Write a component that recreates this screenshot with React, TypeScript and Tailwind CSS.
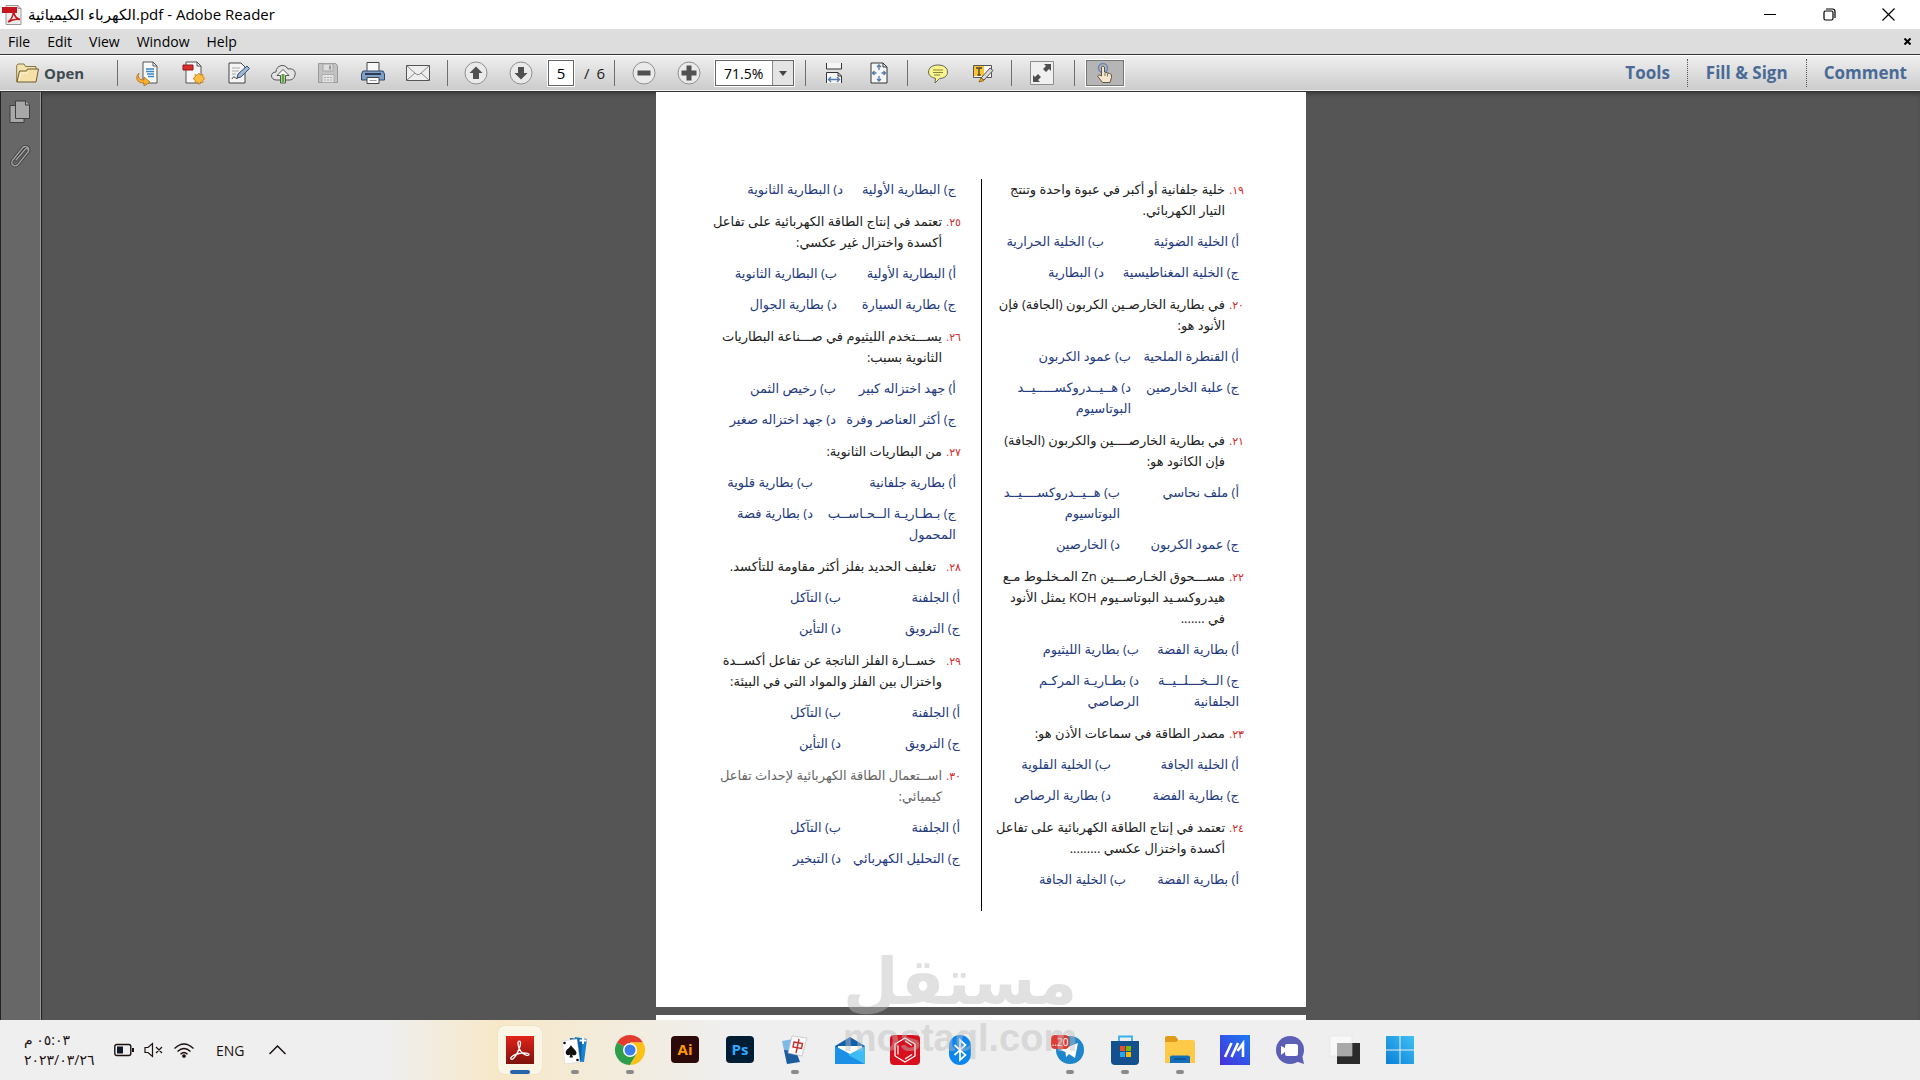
import type { ReactNode } from "react";
import { clsx } from "clsx";

interface Question {
  num?: string;
  lines: string[];
  cols: string;
  faded?: boolean;
  wide?: boolean;
  indent?: boolean;
  options: string[][];
}

const rightColumn: Question[] = [
  {
    num: "١٩",
    lines: ["خلية جلفانية أو أكبر في عبوة واحدة وتنتج", "التيار الكهربائي."],
    cols: "grid-cols-[135px_1fr]",
    options: [["أ) الخلية الضوئية"], ["ب) الخلية الحرارية"], ["ج) الخلية المغناطيسية"], ["د) البطارية"]],
  },
  {
    num: "٢٠",
    lines: ["في بطارية الخارصـين الكربون (الجافة) فإن", "الأنود هو:"],
    cols: "grid-cols-[108px_1fr]",
    options: [["أ) القنطرة الملحية"], ["ب) عمود الكربون"], ["ج) علبة الخارصين"], ["د) هــيــدروكســـــيــد", "البوتاسيوم"]],
  },
  {
    num: "٢١",
    lines: ["في بطارية الخارصــــين والكربون (الجافة)", "فإن الكاثود هو:"],
    cols: "grid-cols-[119px_1fr]",
    options: [["أ) ملف نحاسي"], ["ب) هــيــدروكســــيــد", "البوتاسيوم"], ["ج) عمود الكربون"], ["د) الخارصين"]],
  },
  {
    num: "٢٢",
    lines: ["مســـحوق الخـارصـــين Zn المـخلـوط مـع", "هيدروكسـيد البوتاسـيوم KOH يمثل الأنود", "في ......."],
    cols: "grid-cols-[100px_1fr]",
    options: [["أ) بطارية الفضة"], ["ب) بطارية الليثيوم"], ["ج) الــخـــلــيــة", "الجلفانية"], ["د) بطـاريـة المركـم", "الرصاصي"]],
  },
  {
    num: "٢٣",
    lines: ["مصدر الطاقة في سماعات الأذن هو:"],
    cols: "grid-cols-[128px_1fr]",
    options: [["أ) الخلية الجافة"], ["ب) الخلية القلوية"], ["ج) بطارية الفضة"], ["د) بطارية الرصاص"]],
  },
  {
    num: "٢٤",
    lines: ["تعتمد في إنتاج الطاقة الكهربائية على تفاعل", "أكسدة واختزال عكسي ........."],
    cols: "grid-cols-[113px_1fr]",
    options: [["أ) بطارية الفضة"], ["ب) الخلية الجافة"]],
  },
];

const leftColumn: Question[] = [
  {
    lines: [],
    cols: "grid-cols-[113px_1fr]",
    options: [["ج) البطارية الأولية"], ["د) البطارية الثانوية"]],
  },
  {
    num: "٢٥",
    lines: ["تعتمد في إنتاج الطاقة الكهربائية على تفاعل", "أكسدة واختزال غير عكسي:"],
    cols: "grid-cols-[119px_1fr]",
    options: [["أ) البطارية الأولية"], ["ب) البطارية الثانوية"], ["ج) بطارية السيارة"], ["د) بطارية الجوال"]],
  },
  {
    num: "٢٦",
    lines: ["يســـتخدم الليثيوم في صـــناعة البطاريات", "الثانوية بسبب:"],
    cols: "grid-cols-[120px_1fr]",
    options: [["أ) جهد اختزاله كبير"], ["ب) رخيص الثمن"], ["ج) أكثر العناصر وفرة"], ["د) جهد اختزاله صغير"]],
  },
  {
    num: "٢٧",
    lines: ["من البطاريات الثانوية:"],
    cols: "grid-cols-[143px_1fr]",
    options: [["أ) بطارية جلفانية"], ["ب) بطارية قلوية"], ["ج) بـطـاريـة الــحـاســب", "المحمول"], ["د) بطارية فضة"]],
  },
  {
    num: "٢٨",
    lines: ["تغليف الحديد بفلز أكثر مقاومة للتأكسد."],
    cols: "grid-cols-[119px_1fr]",
    wide: true,
    indent: true,
    options: [["أ) الجلفنة"], ["ب) التآكل"], ["ج) الترويق"], ["د) التأين"]],
  },
  {
    num: "٢٩",
    lines: ["خســارة الفلز الناتجة عن تفاعل أكســدة", "واختزال بين الفلز والمواد التي في البيئة:"],
    cols: "grid-cols-[119px_1fr]",
    wide: true,
    indent: true,
    options: [["أ) الجلفنة"], ["ب) التآكل"], ["ج) الترويق"], ["د) التأين"]],
  },
  {
    num: "٣٠",
    lines: ["اســتعمال الطاقة الكهربائية لإحداث تفاعل", "كيميائي:"],
    cols: "grid-cols-[119px_1fr]",
    faded: true,
    wide: true,
    options: [["أ) الجلفنة"], ["ب) التآكل"], ["ج) التحليل الكهربائي"], ["د) التبخير"]],
  },
];

function QuestionBlock({ q }: { q: Question }) {
  return (
    <li className="mb-[11px]">
      {q.num && (
        <div className={clsx("mb-[10px] flex", q.faded ? "text-[#666]" : "text-[#222]")}>
          <span className="w-[19px] shrink-0 text-[11px] text-[#d22a2a]">{q.num}.</span>
          <p className={clsx(q.indent && "indent-[6px]")}>
            {q.lines.map((l, i) => (
              <span key={l} className={clsx("block", i > 0 && "indent-0")}>{l}</span>
            ))}
          </p>
        </div>
      )}
      <div className={clsx("grid gap-y-[10px] text-[#1f3b7d]", q.cols, q.wide ? "pr-px" : "pr-[5px]")}>
        {q.options.map((o) => (
          <p key={o[0]}>
            {o.map((l) => (
              <span key={l} className="block">{l}</span>
            ))}
          </p>
        ))}
      </div>
    </li>
  );
}

function Sep({ className }: { className?: string }) {
  return <span className={clsx("h-[26px] w-px shrink-0 bg-[#6e6e6e]", className)} />;
}

function Tool({ label, children }: { label: string; children: ReactNode }) {
  return (
    <button aria-label={label} className="flex h-[30px] w-[45px] shrink-0 items-center justify-center">
      <svg width="26" height="26" viewBox="0 0 26 26" fill="none">
        {children}
      </svg>
    </button>
  );
}

function PdfIcon() {
  return (
    <svg width="20" height="20" viewBox="0 0 20 20" fill="none">
      <path d="M4 .5h12l3 3v16H4z" fill="#eee" stroke="#999" />
      <path d="M16 .5v3h3" stroke="#999" />
      <path d="M0 2h15v6H0z" fill="#c4161c" />
      <path d="M6 17c3-2 5-6 5.500-10 .8 4 3 6.500 6.500 7.500-4-.8-8 0-12 2.500z" stroke="#c4161c" strokeWidth="1.600" />
    </svg>
  );
}

function Toolbar() {
  const side = "text-[17px] font-bold text-[#4a6a96]";
  return (
    <div className="flex h-[38px] shrink-0 items-center border-y border-[#333] bg-linear-to-b from-[#f0f0f0] to-[#cbcbcb] shadow-[inset_0_1px_#fff,inset_0_-1px_#f2f2f2]">
      <button className="flex w-[117px] shrink-0 items-center gap-[5px] pl-4 text-[15px] font-bold text-[#3d4a50]">
        <svg width="23" height="20" viewBox="0 0 23 20" fill="none">
          <path d="M.7 19V2.500L2 1h6l1.500 2.500H20V7" fill="#f2e3b0" stroke="#8a7440" />
          <path d="M1 19 3.500 8h7l1-2h11L20 19z" fill="#f7e0a8" stroke="#6d5a2c" />
          <path d="M3 17.500 5 10h7" stroke="#fff6d8" />
        </svg>
        Open
      </button>
      <Sep className="mr-[7px]" />
      <Tool label="Convert">
        <path d="M8 2h10l4 4v17H8z" fill="#fafafa" stroke="#555" />
        <path d="M18 2v4h4" stroke="#555" />
        <path d="M11 9h8M11 11.500h8M12 14h7M13 16.500h6" stroke="#3d87c8" strokeWidth="1.300" />
        <path d="M4 13c-2 4 0 7 5 7v-3l6 5-6 4v-3c-8 0-9-6-5-10z" fill="#f7b030" stroke="#b06c10" strokeWidth=".8" />
      </Tool>
      <Tool label="Create PDF">
        <path d="M6 2h11l4 4v17H6z" fill="#f6f6f6" stroke="#555" />
        <path d="M17 2v4h4" stroke="#555" />
        <path d="M3 5h10v5H3z" fill="#dd2c2c" stroke="#8b1a1a" />
        <path d="m19 13 1.500 2.200 2.500-.7-.2 2.600 2.200 1.400-2.200 1.500.2 2.500-2.500-.5L19 24.500 17.500 22l-2.500.5.2-2.500-2.200-1.500 2.200-1.400-.2-2.600 2.500.7z" fill="#fbbc42" stroke="#c9801a" strokeWidth=".8" />
      </Tool>
      <Tool label="Edit">
        <path d="M4 3h12l4 4v16H4z" fill="#f4f4f4" stroke="#444" />
        <path d="M7 8h8M7 11h7M7 14h4" stroke="#aaa" />
        <path d="M7 19c1-2 2-3 3-1.500s2 1 3 0" stroke="#333" />
        <path d="m12 18 1-4 9-8 2.500 2.500L16 17z" fill="#9db8d6" stroke="#3a4f68" />
      </Tool>
      <Tool label="Upload">
        <path d="M6 20c-6-.5-6-8 0-8C6 5 15 3 18 9c5-1 8 2 7 6s-3 5-6 5z" fill="#e3e3e3" stroke="#555" />
        <path d="m13 9.500 6 6h-3.500V23h-5v-7.500H7z" fill="#fff" stroke="#555" />
        <path d="M13 14v8.500" stroke="#5aa636" strokeWidth="3" />
      </Tool>
      <Tool label="Save">
        <path d="M3.500 3.500h17l2 2v17h-19z" fill="#c2c2c2" stroke="#999" />
        <path d="M8 4h10v7H8z" fill="#dedede" stroke="#a5a5a5" />
        <path d="M14 5.500h2v4h-2z" fill="#999" />
        <path d="M7 14.500h12v8H7z" fill="#e4e4e4" stroke="#aaa" />
        <path d="M9 17.500h8M9 20h8" stroke="#aaa" strokeDasharray="2 1" />
      </Tool>
      <Tool label="Print">
        <path d="M7 2.500h12V12H7z" fill="#f8f8f8" stroke="#444" />
        <path d="M3 11h20l1.500 3v6h-23v-6z" fill="#7f9fc4" stroke="#34496a" />
        <path d="M5 14h16" stroke="#2c3c55" strokeWidth="2" />
        <path d="M7 17.500h12v6H7z" fill="#fff" stroke="#444" />
        <path d="M9.500 20.500h7" stroke="#999" />
      </Tool>
      <Tool label="Email">
        <path d="M1.500 5.500h23v15h-23z" fill="#eee" stroke="#555" />
        <path d="M2 6l9 8q2 1.500 4 0l9-8M2 20l8-7M24 20l-8-7" stroke="#888" />
      </Tool>
      <Sep className="ml-[7px] mr-[5px]" />
      <Tool label="Previous page">
        <circle cx="13" cy="13" r="11" fill="#eaeaea" stroke="#8f8f8f" />
        <path d="m13 6.500 6.500 6.500H16v6h-6v-6H6.500z" fill="#505050" />
      </Tool>
      <Tool label="Next page">
        <circle cx="13" cy="13" r="11" fill="#eaeaea" stroke="#8f8f8f" />
        <path d="m13 19.500 6.500-6.500H16V7h-6v6H6.500z" fill="#505050" />
      </Tool>
      <input
        aria-label="Page"
        defaultValue="5"
        className="ml-[5px] h-[26px] w-[26px] shrink-0 border border-[#666] bg-white text-center text-[15px] text-black outline outline-white"
      />
      <span className="ml-[10px] flex w-[30px] shrink-0 gap-[7px] text-[15px] text-[#222]">
        <span>/</span>
        <span>6</span>
      </span>
      <Sep className="mr-[6px]" />
      <Tool label="Zoom out">
        <circle cx="13" cy="13" r="11" fill="#eaeaea" stroke="#8f8f8f" />
        <path d="M6.500 10.500h13v5h-13z" fill="#505050" />
      </Tool>
      <Tool label="Zoom in">
        <circle cx="13" cy="13" r="11" fill="#eaeaea" stroke="#8f8f8f" />
        <path d="M10.500 5.500h5v5h5v5h-5v5h-5v-5h-5v-5h5z" fill="#505050" />
      </Tool>
      <div className="ml-1 flex h-[26px] w-[79px] shrink-0 border border-[#666] bg-white outline outline-white">
        <input aria-label="Zoom" defaultValue="71.5%" className="w-[56px] pl-2 text-[14px] text-black" />
        <button aria-label="Zoom levels" className="flex flex-1 items-center justify-center border-l border-[#888] bg-[#e4e4e4]">
          <svg width="8" height="5" viewBox="0 0 8 5">
            <path d="M0 0h8L4 5z" fill="#444" />
          </svg>
        </button>
      </div>
      <Sep className="ml-[11px] mr-[5px]" />
      <Tool label="Fit width">
        <path d="M5.500 3v6h15V3" fill="#f6f6f6" stroke="#333" />
        <path d="M5.500 23V12.500H17l3.500 3.500v7" fill="#f6f6f6" stroke="#333" />
        <path d="M17 12.500V16h3.500" stroke="#333" />
        <path d="M8 19.500h10M10 17l-2.500 2.500L10 22M16 17l2.500 2.500L16 22" stroke="#5577ab" strokeWidth="1.300" />
      </Tool>
      <Tool label="Fit page">
        <path d="M5 3h12l4 4v16H5z" fill="#f6f6f6" stroke="#333" />
        <path d="M17 3v4h4" stroke="#333" />
        <path d="M13 5v5M11 7l2-2 2 2M13 21v-5M11 19l2 2 2-2M6.500 13h4M8.500 11l-2 2 2 2M19.500 13h-4M17.500 11l2 2-2 2" stroke="#5577ab" strokeWidth="1.300" />
      </Tool>
      <Sep className="ml-[6px] mr-[7px]" />
      <Tool label="Sticky note">
        <path d="M13 5c6 0 9.500 3 9.500 7s-3.500 6.500-8 6.500L10 23l.5-4.700C6 17.500 3.500 15 3.500 12 3.500 8 7 5 13 5z" fill="#fbf58c" stroke="#666" />
        <path d="M8 10h10M8 12.500h10M9 15h6" stroke="#8a8540" />
      </Tool>
      <Tool label="Highlight text">
        <path d="M3.500 5.500h18v12h-18z" fill="#fff" stroke="#555" />
        <path d="M4 6h10v10H4z" fill="#fcc52e" />
        <path d="M6 8h6M9 8v7M7.500 15h3" stroke="#444" strokeWidth="1.400" />
        <path d="m11 18 9-10 3 2.500L14 20z" fill="#d9d9d9" stroke="#555" />
        <path d="m9 22 2-4 3 2.500z" fill="#f4b12a" stroke="#99661a" />
      </Tool>
      <Sep className="ml-[6px] mr-[7px]" />
      <Tool label="Read mode">
        <path d="M1.500 1.500h23v23h-23z" fill="#f0f0f0" stroke="#8d8d8d" />
        <path d="M22 4v7l-2-2-3 3-3-3 3-3-2-2zM4 22v-7l2 2 3-3 3 3-3 3 2 2z" fill="#4f4f4f" />
      </Tool>
      <Sep className="ml-[10px] mr-[11px]" />
      <button
        aria-label="Hand tool"
        className="flex h-[26px] w-[38px] shrink-0 items-center justify-center border border-[#777] bg-[#b5b5b5] outline outline-white"
      >
        <svg width="22" height="22" viewBox="0 0 22 22" fill="none">
          <circle cx="9" cy="6" r="4.500" stroke="#6d88bd" strokeWidth="1.600" />
          <path d="M7.500 14V5q1.500-2 3 0v5l5 1.500q3 .5 2 4L16 20.500H8.500L3.500 14q1-2.500 4 0z" fill="#f6e6cd" stroke="#5f5548" />
          <path d="M11 11v3M13.500 11.500v3" stroke="#5f5548" strokeWidth=".8" />
        </svg>
      </button>
      <div className="ml-auto flex h-full items-center">
        <button className={clsx("px-[17px]", side)}>Tools</button>
        <span className="h-7 border-l border-dotted border-[#555]" />
        <button className={clsx("px-[18px]", side)}>Fill &amp; Sign</button>
        <span className="h-7 border-l border-dotted border-[#555]" />
        <button className={clsx("pl-[17px] pr-[13px]", side)}>Comment</button>
      </div>
    </div>
  );
}

interface AppIcon {
  name: string;
  running?: boolean;
  active?: boolean;
  art: ReactNode;
}

const apps: AppIcon[] = [
  {
    name: "Adobe Reader",
    active: true,
    art: (
      <>
        <path d="M1 1h28v28H1z" fill="url(#acro)" />
        <path d="M6 24c-1.500-1.500 3-4.500 8-5.500 5-1 10-.5 10 1s-3.500 1-6-1c-3.500-3-5-7-5-10.500 0-2.500 3-2.500 2.500.5C15 14 9 26 6 24z" stroke="#fff" strokeWidth="1.300" />
      </>
    ),
  },
  {
    name: "Solitaire",
    running: true,
    art: (
      <>
        <path d="m15 2 12 2-3 23-9-1z" fill="#1583d6" />
        <path d="m10 3 12 1-1 23H9z" fill="#0c5ea6" />
        <path d="m2 6 15-2 3 23-15 2z" fill="#fff" stroke="#ccc" strokeWidth=".5" />
        <path d="M11 10c1 3 5.500 5 5.500 8 0 2.500-3 3-4.500 1.500l1 3H9.500l.7-3c-2 1.500-4.500.5-4.500-2C5.700 14.500 10 13 11 10z" fill="#111" />
        <circle cx="4.500" cy="8" r="1.300" fill="#111" />
        <circle cx="17.500" cy="25" r="1.300" fill="#111" />
        <path d="M23 2v7M19.500 5.500h7" stroke="#fff" strokeWidth="2" />
      </>
    ),
  },
  {
    name: "Chrome",
    running: true,
    art: (
      <>
        <path d="M15 15 2 7.500A15 15 0 0 1 28 7.500H15z" fill="#e33b2e" />
        <path d="M15 15 2 7.500A15 15 0 0 0 15 30l6.500-11z" fill="#2f9e4c" />
        <path d="M15 7.500h13A15 15 0 0 1 15 30l6.500-11z" fill="#fbc116" />
        <circle cx="15" cy="15" r="7" fill="#fff" />
        <circle cx="15" cy="15" r="5.500" fill="#3b7ded" />
      </>
    ),
  },
  {
    name: "Illustrator",
    art: (
      <>
        <rect x="1" y="1" width="28" height="27" rx="4" fill="#2d0a0a" />
        <text x="15" y="20" textAnchor="middle" fontSize="15" fontWeight="700" fill="#ff9a00">Ai</text>
      </>
    ),
  },
  {
    name: "Photoshop",
    art: (
      <>
        <rect x="1" y="1" width="28" height="27" rx="4" fill="#001d34" />
        <text x="15" y="20" textAnchor="middle" fontSize="15" fontWeight="700" fill="#31a8ff">Ps</text>
      </>
    ),
  },
  {
    name: "Mahjong",
    running: true,
    art: (
      <>
        <path d="m2 6 11-2 5 22-11 3z" fill="#7dbbe6" />
        <path d="m4 15 12 1 4 11-13 2z" fill="#1d5c9c" />
        <path d="m12 1 15 2-5 18-14-3z" fill="#fafafa" stroke="#bbb" strokeWidth=".7" />
        <path d="m14 7 8.500 1.500-1 5L13 12zM19 4l-3 14" stroke="#c92b2b" strokeWidth="1.400" />
      </>
    ),
  },
  {
    name: "Mail",
    art: (
      <>
        <path d="M0 11 15 2l15 9v6H0z" fill="#1160ab" />
        <path d="M3 11h24v6l-12 5L3 16z" fill="#fff" />
        <path d="M0 11v18h30L15 19z" fill="#1c8fe6" />
        <path d="M30 11v18L13 20z" fill="#3ebdf5" />
      </>
    ),
  },
  {
    name: "Chemistry",
    art: (
      <>
        <rect width="30" height="30" rx="4" fill="#d90f1e" />
        <path d="m15 3 10 6v12l-10 6-10-6V9z" stroke="#fff" strokeWidth="1.300" />
        <path d="M8 10.500v9M15 6l7 4.500M15 24l7-4.500" stroke="#fff" strokeWidth="1.200" />
      </>
    ),
  },
  {
    name: "Bluetooth",
    art: (
      <>
        <rect x="4" width="22" height="30" rx="11" fill="#0b86ee" />
        <path d="m9.500 10 11 10-5.500 5V5l5.500 5-11 10" stroke="#fff" strokeWidth="1.700" />
      </>
    ),
  },
  { name: "", art: null },
  {
    name: "Telegram",
    running: true,
    art: (
      <>
        <circle cx="15" cy="15" r="14" fill="#1d86cc" />
        <path d="m5 15 18-7-3 15-6-4-3 3-.5-5z" fill="#fff" />
        <rect x="-4" y="0" width="18" height="14" rx="4" fill="#e03c36" />
        <text x="5" y="11" textAnchor="middle" fontSize="10" fill="#fff">..20</text>
      </>
    ),
  },
  {
    name: "Microsoft Store",
    running: true,
    art: (
      <>
        <path d="M9 6V1.500h13V6" stroke="#36b2ee" strokeWidth="1.800" />
        <path d="M1 6h28v20q0 4-4 4H5q-4 0-4-4z" fill="#14508d" />
        <path d="M10 11h5v5h-5z" fill="#f25022" />
        <path d="M16 11h5v5h-5z" fill="#7fba00" />
        <path d="M10 17h5v5h-5z" fill="#29a7ea" />
        <path d="M16 17h5v5h-5z" fill="#ffb900" />
      </>
    ),
  },
  {
    name: "File Explorer",
    running: true,
    art: (
      <>
        <path d="M0 3q0-2 2-2h8l3 3v6H0z" fill="#e19b1a" />
        <path d="M0 7h11l3-2h14q2 0 2 2v21H0z" fill="#ffca47" />
        <path d="M5 28v-6q0-1.500 2-1.500h16q2 0 2 1.500v6z" fill="#136fba" />
        <path d="M9 24h12" stroke="#0c4d88" strokeWidth="1.500" />
      </>
    ),
  },
  {
    name: "MyASUS",
    art: (
      <>
        <path d="M0 0h30v30H0z" fill="url(#asus)" />
        <path d="m5 22 6.500-14M11.500 22 18 8M17.500 16 23 8.500V22" stroke="#fff" strokeWidth="2.600" />
      </>
    ),
  },
  {
    name: "Chat",
    art: (
      <>
        <circle cx="15" cy="15" r="14" fill="#5b5fb5" />
        <path d="M20 26l9 3-2-9z" fill="#5b5fb5" />
        <rect x="10" y="9" width="13" height="12" rx="2" fill="#fff" />
        <path d="m6 11 4 2v4l-4 3z" fill="#fff" />
      </>
    ),
  },
  {
    name: "Task View",
    art: (
      <>
        <path d="M7 8h23v21H7z" fill="#2b2b2b" />
        <path d="M0 1h22v20H0z" fill="#f8f8f8" stroke="#dcdcdc" strokeWidth=".5" />
        <path d="M7 8h15v13H7z" fill="#a9a9a9" />
      </>
    ),
  },
  {
    name: "Start",
    art: <path d="M1 1h13.500v13.500H1zM15.500 1H29v13.500H15.500zM1 15.500h13.500V29H1zM15.500 15.500H29V29H15.500z" fill="url(#win)" />,
  },
];

function Taskbar() {
  return (
    <footer className="flex h-[60px] shrink-0 bg-[#efefef] bg-linear-to-r from-[#efefef] from-20% via-[#f7e8c8] via-26% to-[#efefef] to-38% text-[#1c1010]">
      <div className="flex flex-1 items-center pl-6">
        <div className="w-[90px] text-[14px] leading-[20px]">
          <p dir="rtl" className="text-left">٠٥:٠٣ م</p>
          <p>٢٠٢٣/٠٣/٢٦</p>
        </div>
        <svg width="20" height="14" viewBox="0 0 20 14" fill="none">
          <rect x=".8" y="1.500" width="16" height="11" rx="2" stroke="currentColor" strokeWidth="1.400" />
          <path d="M3 3.500h6v7H3z" fill="#111827" />
          <path d="M18 5h2v4h-2z" fill="currentColor" />
        </svg>
        <svg className="ml-[10px]" width="20" height="16" viewBox="0 0 20 16" fill="none" stroke="currentColor">
          <path d="M1 5.500v5h3l4.500 4v-13L4 5.500zM12 5l6 6M18 5l-6 6" strokeWidth="1.200" />
        </svg>
        <svg className="ml-[10px]" width="20" height="15" viewBox="0 0 20 15" fill="none" stroke="currentColor" strokeWidth="1.300">
          <path d="M.5 5.500q9.500-9 19 0M3.500 8.500q6.500-6 13 0M6.500 11.200q3.500-3.500 7 0" />
          <circle cx="10" cy="13" r="1.200" fill="currentColor" />
        </svg>
        <span className="ml-[22px] text-[14px]">ENG</span>
        <svg className="ml-6" width="17" height="10" viewBox="0 0 17 10" fill="none" stroke="currentColor" strokeWidth="1.500">
          <path d="m.5 9 8-8 8 8" />
        </svg>
      </div>
      <div className="flex pt-[6px]">
        {apps.map((a, i) => (
          <button key={i} aria-label={a.name} className="flex w-[55px] justify-center">
            <span
              className={clsx(
                "flex h-12 w-[44px] flex-col items-center justify-between rounded-md pt-[9px]",
                a.active && "bg-[#fbf5e6] shadow-[0_0_1px_#cbbf9f]",
              )}
            >
              <svg width="30" height="30" viewBox="0 0 30 30" fill="none" className="overflow-visible">
                <defs>
                  <linearGradient id="acro" x1="0" y1="0" x2="0" y2="1">
                    <stop stopColor="#e2231a" />
                    <stop offset="1" stopColor="#7d120c" />
                  </linearGradient>
                  <linearGradient id="asus" x1="1" y1="0" x2="0" y2="1">
                    <stop stopColor="#1b7cf2" />
                    <stop offset="1" stopColor="#4a2fdc" />
                  </linearGradient>
                  <linearGradient id="win" x1="1" y1="0" x2="0" y2="1">
                    <stop stopColor="#3fc0f5" />
                    <stop offset="1" stopColor="#0a7fd6" />
                  </linearGradient>
                </defs>
                {a.art}
              </svg>
              {a.active && <span className="h-1 w-5 rounded-full bg-[#2763a8]" />}
              {a.running && <span className="h-1 w-2 rounded-full bg-[#8a8a8a]" />}
            </span>
          </button>
        ))}
      </div>
      <div className="flex-1 pr-6" />
    </footer>
  );
}

export default function App() {
  return (
    <div className="relative flex h-screen flex-col overflow-hidden bg-white font-['Open_Sans','DejaVu_Sans',sans-serif] text-black">
      <header className="flex h-[29px] shrink-0 items-center pl-[2px]">
        <PdfIcon />
        <h1 className="ml-[6px] text-[15px]">الكهرباء الكيميائية.pdf - Adobe Reader</h1>
        <div className="ml-auto flex items-center gap-[46px] pr-[25px]">
          <button aria-label="Minimize">
            <svg width="13" height="13" viewBox="0 0 13 13"><path d="M0 6h12v1H0z" /></svg>
          </button>
          <button aria-label="Restore">
            <svg width="13" height="13" viewBox="0 0 13 13" fill="none" stroke="#000" strokeWidth="1.200">
              <rect x="1" y="3" width="9" height="9" rx="1.500" />
              <path d="M3 1h6.500q2.500 0 2.500 2.500V10" />
            </svg>
          </button>
          <button aria-label="Close">
            <svg width="13" height="13" viewBox="0 0 13 13" stroke="#000" strokeWidth="1.200"><path d="m.5.500 12 12M12.500.500l-12 12" /></svg>
          </button>
        </div>
      </header>
      <nav className="flex h-[25px] shrink-0 items-center gap-[17px] bg-[#dddddd] pl-2 text-[14px]">
        <button>File</button>
        <button>Edit</button>
        <button>View</button>
        <button>Window</button>
        <button>Help</button>
        <button aria-label="Close document" className="ml-auto mr-[9px]">
          <svg width="7" height="7" viewBox="0 0 7 7" stroke="#000" strokeWidth="2"><path d="m.5.500 6 6M6.500.500l-6 6" /></svg>
        </button>
      </nav>
      <Toolbar />
      <div className="flex min-h-0 flex-1">
        <aside className="flex w-[42px] shrink-0 flex-col items-center gap-[20px] border-x border-x-[#222] bg-[#676767] pt-[8px] pr-[3px] shadow-[inset_-1px_0_#999]">
          <button aria-label="Page thumbnails">
            <svg width="22" height="24" viewBox="0 0 22 24" fill="#a8a8a8" stroke="#3f3f3f">
              <path d="M1 5.500h14v17H1z" />
              <path d="M6.500 1h10l4 4v13.500h-14z" />
              <path d="M16.500 1v4h4" />
            </svg>
          </button>
          <button aria-label="Attachments">
            <svg width="22" height="24" viewBox="0 0 22 24" fill="none" strokeLinecap="round">
              <path d="m7 16 9-10.500c2-2 4.500 0 3 2.500L9 20.500c-3 3-8 0-5.500-4L13 4.500c3-4 9-1 6 4" stroke="#3c3c3c" strokeWidth="3" />
              <path d="m7 16 9-10.500c2-2 4.500 0 3 2.500L9 20.500c-3 3-8 0-5.500-4L13 4.500c3-4 9-1 6 4" stroke="#a5a5a5" strokeWidth="1.300" />
            </svg>
          </button>
        </aside>
        <main className="flex flex-1 flex-col items-center overflow-hidden bg-[#555555] shadow-[inset_0_4px_4px_-2px_#3a3a3a]">
          <article
            dir="rtl"
            className="flex w-[650px] shrink-0 bg-white pt-[87px] pr-[62px] pb-[96px] font-['Open_Sans','DejaVu_Sans',sans-serif] text-[13px] leading-[21px] whitespace-nowrap"
          >
            <ol className="w-[263px] border-l border-black pb-[10px]">
              {rightColumn.map((q, i) => <QuestionBlock key={i} q={q} />)}
            </ol>
            <ol className="mr-5 w-[262px]">
              {leftColumn.map((q, i) => <QuestionBlock key={i} q={q} />)}
            </ol>
          </article>
          <article className="mt-2 w-[650px] flex-1 bg-white" />
        </main>
      </div>
      <Taskbar />
      <div className="pointer-events-none absolute bottom-[22px] left-1/2 flex w-[230px] -translate-x-1/2 flex-col items-center font-bold text-[#bebebe] opacity-45">
        <span dir="rtl" className="font-['DejaVu_Sans'] text-[64px] leading-[72px]">مستقل</span>
        <span className="font-['Liberation_Sans'] text-[38px] leading-[40px]">mostaql.com</span>
      </div>
    </div>
  );
}
